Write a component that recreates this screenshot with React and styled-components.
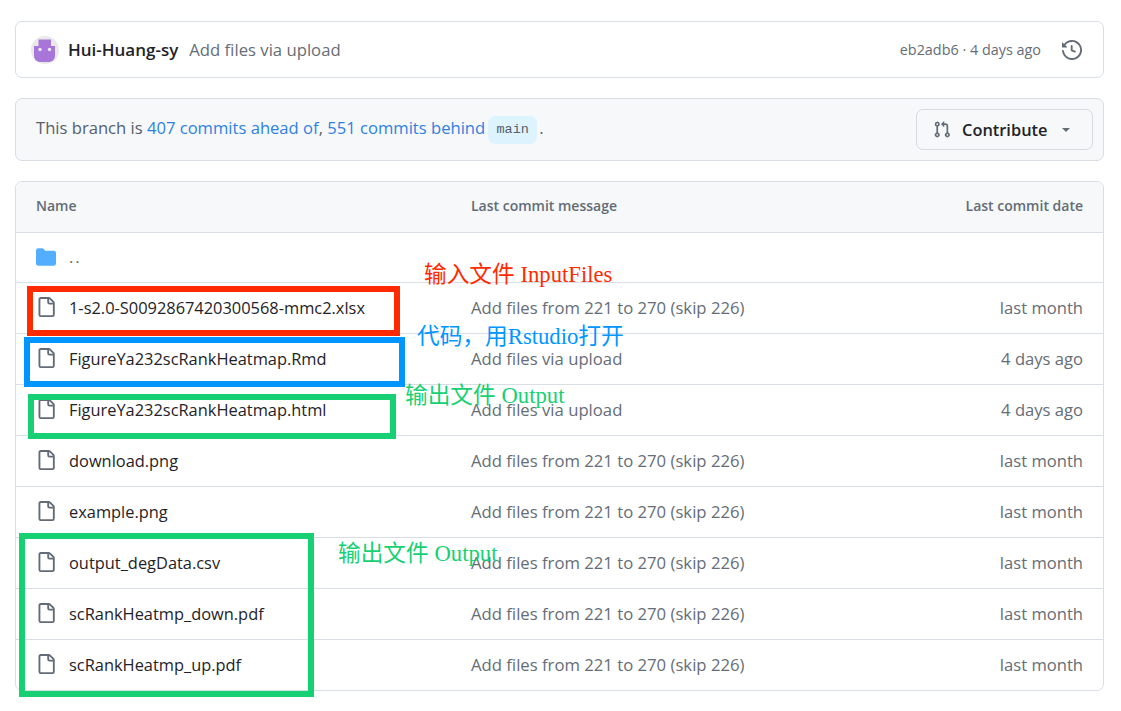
import React from "react"
import styled, { createGlobalStyle } from "styled-components"

const GlobalStyle = createGlobalStyle`
  html, body {
    margin: 0;
    padding: 0;
    background: #fff;
  }
  body {
    font-family: "Open Sans", "Noto Sans", "Noto Sans CJK SC", sans-serif;
    color: #1f2328;
  }
`

const Page = styled.div`
  position: relative;
  width: 1121px;
  height: 711px;
  overflow: hidden;
  padding: 21px 17px 0 15px;
  box-sizing: border-box;
  display: flex;
  flex-direction: column;
  gap: 20px;
`

const Card = styled.div`
  border: 1px solid #d8dee4;
  border-radius: 7px;
  box-sizing: border-box;
  background: ${props => (props.$muted ? "#f6f8fa" : "#fff")};
  height: ${props => props.$height}px;
  display: flex;
  align-items: center;
  justify-content: space-between;
`

const CommitCard = styled(Card)`
  padding: 0 21px 0 15px;
`

const BranchCard = styled(Card)`
  padding: 0 10px 0 20px;
`

const Side = styled.div`
  display: flex;
  align-items: center;
`

const Author = styled.span`
  font-size: 17px;
  font-weight: 600;
  margin: 0 11px 0 9px;
  color: #1f2328;
`

const Muted = styled.span`
  font-size: ${props => props.$size || 16.7}px;
  color: #656d76;
`

const HistoryIcon = styled.svg`
  width: 20px;
  height: 20px;
  margin-left: 21px;
  fill: #636c76;
`

const BranchText = styled.div`
  display: flex;
  align-items: center;
  padding-bottom: 4px;
  font-size: 16.6px;
  color: #57606a;
  white-space: pre;
`

const BranchLink = styled.span`
  color: #2f81e0;
`

const BranchPill = styled.span`
  font-family: "Liberation Mono", monospace;
  font-size: 13.5px;
  color: #57606a;
  background: #ddf4ff;
  border-radius: 7px;
  height: 28px;
  width: 49px;
  margin: 4px 2px 0 3px;
  display: flex;
  align-items: center;
  justify-content: center;
`

const ContributeButton = styled.button`
  width: 177px;
  height: 41px;
  box-sizing: border-box;
  border: 1px solid #d5dbe1;
  border-radius: 7px;
  background: #f6f8fa;
  display: flex;
  align-items: center;
  padding: 0 0 0 16px;
  font-family: inherit;
  font-size: 16.4px;
  font-weight: 600;
  color: #1f2328;
  svg {
    width: 18px;
    height: 19px;
    fill: #636c76;
    margin-right: 11px;
  }
  i {
    width: 0;
    height: 0;
    margin-left: 15px;
    border-style: solid;
    border-width: 4.5px 4.5px 0;
    border-color: #636c76 transparent transparent;
  }
`

const Table = styled.div`
  border: 1px solid #d8dee4;
  border-radius: 7px;
  overflow: hidden;
`

const Row = styled.div`
  display: grid;
  grid-template-columns: 435px 1fr auto;
  align-items: center;
  height: ${props => (props.$short ? 50 : 51)}px;
  box-sizing: border-box;
  padding: 0 20px 2px;
  border-top: ${props => (props.$first ? "none" : "1px solid #d8dee4")};
`

const HeadRow = styled(Row)`
  padding-bottom: 3px;
  background: #f6f8fa;
  font-size: 14px;
  font-weight: 600;
  color: #636c76;
`

const NameCell = styled.div`
  display: flex;
  align-items: center;
  gap: 13px;
  font-size: 16.4px;
  color: #1f2328;
  svg {
    width: 20px;
    height: 20px;
    flex-shrink: 0;
    fill: ${props => (props.$folder ? "#54aeff" : "#636c76")};
  }
`

const Dots = styled.span`
  color: #636c76;
  letter-spacing: 2px;
`

const Mark = styled.div`
  position: absolute;
  box-sizing: border-box;
  left: ${props => props.$x}px;
  top: ${props => props.$y}px;
  width: ${props => props.$w}px;
  height: ${props => props.$h}px;
  border: 6px solid ${props => props.$color};
`

const Note = styled.div`
  position: absolute;
  left: ${props => props.$x}px;
  top: ${props => props.$y}px;
  font-family: "Liberation Serif", "Noto Sans CJK SC", serif;
  font-size: 22.7px;
  line-height: 26px;
  white-space: nowrap;
  color: ${props => props.$color};
`

const FILE_PATH = "M2 1.75C2 .784 2.784 0 3.75 0h6.586c.464 0 .909.184 1.237.513l2.914 2.914c.329.328.513.773.513 1.237v9.586A1.75 1.75 0 0 1 13.25 16h-9.5A1.75 1.75 0 0 1 2 14.25Zm1.75-.25a.25.25 0 0 0-.25.25v12.5c0 .138.112.25.25.25h9.5a.25.25 0 0 0 .25-.25V6h-2.75A1.75 1.75 0 0 1 9 4.25V1.5Zm6.75.062V4.25c0 .138.112.25.25.25h2.688l-.011-.013-2.914-2.914-.013-.011Z"
const FOLDER_PATH = "M1.75 1A1.75 1.75 0 0 0 0 2.75v10.5C0 14.216.784 15 1.75 15h12.5A1.75 1.75 0 0 0 16 13.25v-8.5A1.75 1.75 0 0 0 14.25 3H7.5a.25.25 0 0 1-.2-.1l-.9-1.2C6.07 1.26 5.55 1 5 1H1.75Z"
const HISTORY_PATH = "m.427 1.927 1.215 1.215a8.002 8.002 0 1 1-1.6 5.685.75.75 0 1 1 1.493-.154 6.5 6.5 0 1 0 1.18-4.458l1.358 1.358A.25.25 0 0 1 3.896 6H.25A.25.25 0 0 1 0 5.75V2.104a.25.25 0 0 1 .427-.177ZM7.75 4a.75.75 0 0 1 .75.75v2.992l2.028.812a.75.75 0 0 1-.557 1.392l-2.5-1A.751.751 0 0 1 7 8.25v-3.5A.75.75 0 0 1 7.75 4Z"
const PR_PATH = "M1.5 3.25a2.25 2.25 0 1 1 3 2.122v5.256a2.251 2.251 0 1 1-1.5 0V5.372A2.25 2.25 0 0 1 1.5 3.25Zm5.677-.177L9.573.677A.25.25 0 0 1 10 .854V2.5h1A2.5 2.5 0 0 1 13.5 5v5.628a2.251 2.251 0 1 1-1.5 0V5a1 1 0 0 0-1-1h-1v1.646a.25.25 0 0 1-.427.177L7.177 3.427a.25.25 0 0 1 0-.354ZM3.75 2.5a.75.75 0 1 0 0 1.5.75.75 0 0 0 0-1.5Zm0 9.5a.75.75 0 1 0 0 1.5.75.75 0 0 0 0-1.5Zm8.25.75a.75.75 0 1 0 1.5 0 .75.75 0 0 0-1.5 0Z"

const BULK = "Add files from 221 to 270 (skip 226)"
const UPLOAD = "Add files via upload"

const files = [
  { name: "1-s2.0-S0092867420300568-mmc2.xlsx", message: BULK, date: "last month" },
  { name: "FigureYa232scRankHeatmap.Rmd", message: UPLOAD, date: "4 days ago" },
  { name: "FigureYa232scRankHeatmap.html", message: UPLOAD, date: "4 days ago" },
  { name: "download.png", message: BULK, date: "last month" },
  { name: "example.png", message: BULK, date: "last month" },
  { name: "output_degData.csv", message: BULK, date: "last month" },
  { name: "scRankHeatmp_down.pdf", message: BULK, date: "last month" },
  { name: "scRankHeatmp_up.pdf", message: BULK, date: "last month" }
]

const Icon = ({ path }) => (
  <svg viewBox="0 0 16 16">
    <path d={path} />
  </svg>
)

const Avatar = () => (
  <svg width="28" height="28" viewBox="0 0 28 28">
    <circle cx="14" cy="14" r="14" fill="#e9e9ea" />
    <path d="M7.5 3.5h12.5v6.5h4v10a6 6 0 0 1-6 6H9a6 6 0 0 1-6-6V10h4.5Z" fill="#a875d8" />
    <circle cx="9" cy="13.5" r="1.7" fill="#f0eaf6" />
    <circle cx="18.5" cy="13.5" r="1.7" fill="#f0eaf6" />
  </svg>
)

const App = () => (
  <Page>
    <GlobalStyle />
    <CommitCard $height={57}>
      <Side>
        <Avatar />
        <Author>Hui-Huang-sy</Author>
        <Muted>{UPLOAD}</Muted>
      </Side>
      <Side>
        <Muted $size={14.4}>eb2adb6 · 4 days ago</Muted>
        <HistoryIcon viewBox="0 0 16 16">
          <path d={HISTORY_PATH} />
        </HistoryIcon>
      </Side>
    </CommitCard>

    <BranchCard $height={63} $muted>
      <BranchText>
        This branch is <BranchLink>407 commits ahead of</BranchLink>, <BranchLink>551 commits behind</BranchLink>
        <BranchPill>main</BranchPill>.
      </BranchText>
      <ContributeButton>
        <svg viewBox="0 0 16 16">
          <path d={PR_PATH} />
        </svg>
        Contribute
        <i />
      </ContributeButton>
    </BranchCard>

    <Table>
      <HeadRow $first $short>
        <div>Name</div>
        <div>Last commit message</div>
        <div>Last commit date</div>
      </HeadRow>
      <Row $short>
        <NameCell $folder>
          <Icon path={FOLDER_PATH} />
          <Dots>..</Dots>
        </NameCell>
      </Row>
      {files.map(file => (
        <Row key={file.name}>
          <NameCell>
            <Icon path={FILE_PATH} />
            {file.name}
          </NameCell>
          <Muted>{file.message}</Muted>
          <Muted $size={16.6}>{file.date}</Muted>
        </Row>
      ))}
    </Table>

    <Mark $x={27} $y={286} $w={373} $h={50} $color="#ff2a00" />
    <Mark $x={24} $y={337} $w={381} $h={50} $color="#0096ff" />
    <Mark $x={28} $y={394} $w={368} $h={45} $color="#17d073" />
    <Mark $x={19} $y={533} $w={295} $h={164} $color="#17d073" />

    <Note $x={424} $y={262} $color="#ff2a00">输入文件 InputFiles</Note>
    <Note $x={417} $y={324} $color="#0096ff">代码，用Rstudio打开</Note>
    <Note $x={405} $y={383} $color="#17d073">输出文件 Output</Note>
    <Note $x={338} $y={541} $color="#17d073">输出文件 Output</Note>
  </Page>
)

export default App
